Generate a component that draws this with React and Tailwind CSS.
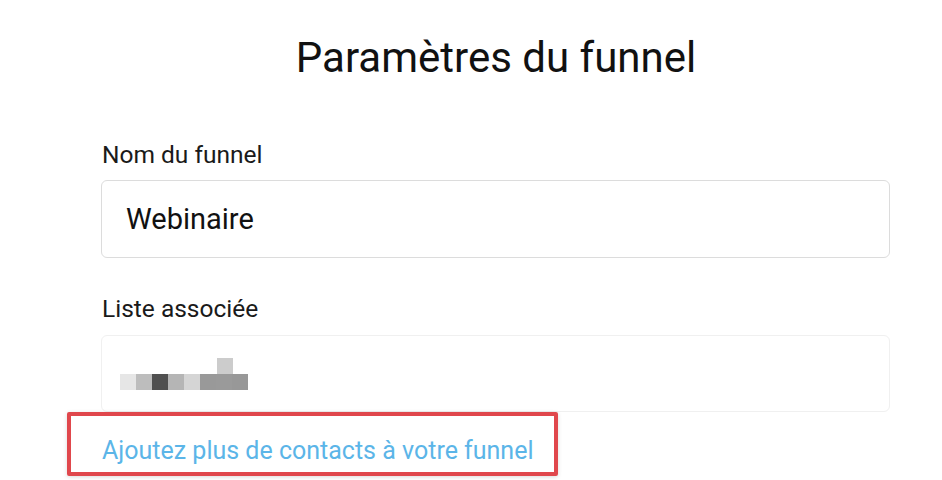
import React from 'react';

const pixels = [
  { c: 'bg-[#e6e6e6]' },
  { c: 'bg-[#bdbdbd]' },
  { c: 'bg-[#505050]' },
  { c: 'bg-[#b5b5b5]' },
  { c: 'bg-[#d5d5d5]' },
  { c: 'bg-[#999999]' },
  { c: 'bg-[#9a9a9a]' },
  { c: 'bg-[#989898]' },
];

const App = () => {
  return (
    <div className="w-[942px] h-[480px] bg-white overflow-hidden font-['Roboto',sans-serif] text-[#111]">
      <h1 className="mt-[33px] text-center text-[42px] leading-[50px] font-normal pl-[50px]">Paramètres du funnel</h1>

      <div className="ml-[101px] w-[789px]">
        {/* Nom */}
        <label className="block mt-[56px] ml-[1px] text-[24.5px] leading-[32px] text-[#1a1a1a]">Nom du funnel</label>
        <div className="mt-[9px] h-[78px] rounded-[6px] border border-[#dcdcdc] flex items-center px-[24px]">
          <span className="text-[29px] leading-[36px] text-[#111]">Webinaire</span>
        </div>

        {/* Liste */}
        <label className="block mt-[35px] ml-[1px] text-[24.5px] leading-[32px] text-[#1a1a1a]">Liste associée</label>
        <div className="mt-[10px] h-[77px] rounded-[6px] border border-[#f0f0f0] flex items-center px-[18px]">
          {/* blurred list name */}
          <div className="flex flex-col">
            <div className="flex">
              <div className="w-[97px]" />
              <div className="w-[16px] h-[16px] bg-[#cccccc]" />
            </div>
            <div className="flex">
              {pixels.map((p, i) => (
                <div key={i} className={`w-[16px] h-[16px] ${p.c}`} />
              ))}
            </div>
          </div>
        </div>

        {/* highlighted link */}
        <div className="-ml-[34px] w-[491px] h-[64px] border-[4px] border-[#e0474c] rounded-[2px] shadow-[0_1px_4px_rgba(0,0,0,0.15)] flex items-center pl-[31px] pt-[14px]">
          <a href="#" className="text-[25px] leading-[30px] text-[#5bb5e8] whitespace-nowrap">Ajoutez plus de contacts à votre funnel</a>
        </div>
      </div>
    </div>
  );
};

export default App;
